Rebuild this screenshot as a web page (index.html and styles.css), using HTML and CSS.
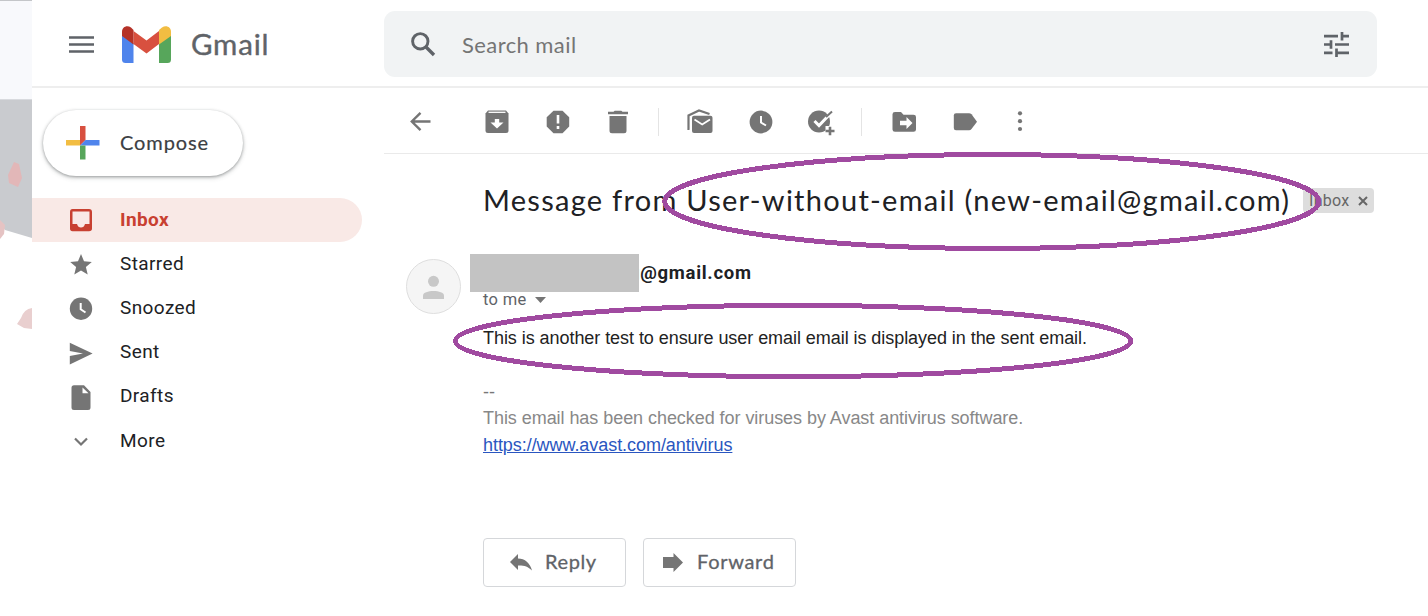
FILE: index.html
```html
<!DOCTYPE html>
<html lang="en">
<head>
<meta charset="utf-8">
<title>Gmail</title>
<link rel="stylesheet" href="styles.css">
</head>
<body>
<div class="page">
  <svg class="backdrop" width="32" height="616" viewBox="0 0 32 616">
    <rect width="32" height="99" fill="#f8f9fc"/>
    <rect width="32" height="1" fill="#c4c6c9"/>
    <path d="M0 99H32V238L5 230L0 224Z" fill="#c9cbcf"/>
    <path d="M0 99.500H32" stroke="#d8dade"/>
    <path d="M14 162L19 164L22 178L18 187L9 183L8 175Z" fill="#e2b7b8"/>
    <path d="M0 220L5 225L4 234L0 239Z" fill="#e5c3c3"/>
    <path d="M32 308Q24 309 21 318L17 324L24 328L32 329Z" fill="#e9cfcf"/>
  </svg>
  <div class="app">
    <header class="header">
      <div class="brand">
        <svg class="burger" width="26" height="18" viewBox="0 0 26 18"><path d="M0 1.500H25M0 8.500H25M0 15.500H25" stroke="#5f6368" stroke-width="2.700"/></svg>
        <svg class="logo" width="49" height="37" viewBox="0 0 49 37">
          <path d="M0 9L11.500 17V37H3.500Q0 37 0 33.500Z" fill="#4f84ec"/>
          <path d="M49 9L37 17V37H45.500Q49 37 49 33.500Z" fill="#57a65b"/>
          <path d="M11.500 5L24.500 14.500L37 5V18L24.500 27.500L11.500 18Z" fill="#d8503f"/>
          <path d="M0 10V5.500C0 1 5 -1.500 9 1.500L11.500 4V18.500Z" fill="#b53228"/>
          <path d="M49 10V5.500C49 1 44 -1.500 40 1.500L37 4V18.500Z" fill="#f2bd42"/>
        </svg>
        <span class="brand-name">Gmail</span>
      </div>
      <div class="search">
        <svg width="25" height="25" viewBox="0 0 25 25" fill="none" stroke="#5f6368"><circle cx="9.300" cy="9.300" r="7.700" stroke-width="2.900"/><path d="M14.500 14.500L23 23" stroke-width="3.400"/></svg>
        <span class="search-text">Search mail</span>
        <svg width="25" height="25" viewBox="0 0 25 25" fill="none" stroke="#5f6368" stroke-width="2.700"><path d="M0 4.200H14M18 4.200H25M18 0V8.500M0 12.500H7M7 8.300V16.700M11 12.500H25M0 20.800H8.500M12.500 20.800H25M12.500 16.500V25"/></svg>
      </div>
    </header>
    <div class="body">
      <nav class="sidebar">
        <div class="compose">
          <svg width="34" height="34" viewBox="0 0 34 34"><path d="M14 0H19.500V14L14 19.500Z" fill="#d8503f"/><path d="M0 14H14V19.500H0Z" fill="#f2bd42"/><path d="M19.500 14H33.500V19.500H14Z" fill="#4f84ec"/><path d="M14 19.500L19.500 19.500V33.500H14Z" fill="#57a65b"/></svg>
          <span>Compose</span>
        </div>
        <div class="item active">
          <svg class="icon" viewBox="0 0 28 28"><path fill-rule="evenodd" d="M5.500 3H22Q25 3 25 6V22.500Q25 25.300 22 25.300H5.500Q3 25.300 3 22.500V6Q3 3 5.500 3ZM5.500 5.500V18H10Q11 21.500 14 21.500T18 18H22.500V5.500Z" fill="#c84031"/></svg>
          <span>Inbox</span>
        </div>
        <div class="item">
          <svg class="icon" viewBox="0 0 28 28"><path d="M14 4L17 11.200L24.800 11.900L18.900 17L20.700 24.600L14 20.600L7.300 24.600L9.100 17L3.200 11.900L11 11.200Z"/></svg>
          <span>Starred</span>
        </div>
        <div class="item">
          <svg class="icon" viewBox="0 0 28 28"><circle cx="14" cy="14.700" r="11.200"/><path d="M13.700 9V15.300L18.500 18.500" fill="none" stroke="#fff" stroke-width="2"/></svg>
          <span>Snoozed</span>
        </div>
        <div class="item">
          <svg class="icon" viewBox="0 0 28 28"><path d="M2.800 3.700L25.600 14.500L2.800 25.500V17L16 14.500L2.800 12Z"/></svg>
          <span>Sent</span>
        </div>
        <div class="item">
          <svg class="icon" viewBox="0 0 28 28"><path fill-rule="evenodd" d="M7 2.300H17L23.500 9V24.500Q23.500 27 21 27H7Q4.500 27 4.500 24.500V4.800Q4.500 2.300 7 2.300ZM15.500 4.500V10.300H21.500Z"/></svg>
          <span>Drafts</span>
        </div>
        <div class="item">
          <svg class="icon" viewBox="0 0 28 28"><path d="M8 11.500L14 17.500L20 11.500" fill="none" stroke="#757575" stroke-width="2.200"/></svg>
          <span>More</span>
        </div>
      </nav>
      <main class="main">
        <div class="toolbar">
          <div class="tools back">
            <svg class="icon" viewBox="0 0 28 28"><path d="M23.500 13.500H5M13.500 4.800L4.800 13.500L13.500 22.200" fill="none" stroke="#757575" stroke-width="2.400"/></svg>
          </div>
          <div class="tools">
            <svg class="icon" viewBox="0 0 28 28"><path d="M5 2.500H23L25.500 5.500V22.500Q25.500 25 23 25H5Q2.500 25 2.500 22.500V5.500Z"/><path d="M5.500 4.300H22.500" stroke="#fff" stroke-width="1.300"/><path d="M11.800 11H16.200V14.500H20.500L14 20.500L7.500 14.500H11.800Z" fill="#fff"/></svg>
            <svg class="icon" viewBox="0 0 28 28"><path d="M9.500 2.700H18.500L25.200 9.300V18.500L18.500 25.200H9.500L2.700 18.500V9.300Z"/><path d="M14 7V15.500M14 18V21" stroke="#fff" stroke-width="2.600"/></svg>
            <svg class="icon" viewBox="0 0 28 28"><path d="M4 3.700H9.500L10.700 2.700H17.300L18.500 3.700H24V6.300H4ZM5.500 8H22.500V22.700Q22.500 25.200 20 25.200H8Q5.500 25.200 5.500 22.700Z"/></svg>
          </div>
          <i class="divider"></i>
          <div class="tools">
            <svg class="icon" viewBox="0 0 28 28"><path d="M8 7.800H24.500Q26.500 7.800 26.500 9.800V23Q26.500 25 24.500 25H8Q6 25 6 23V9.800Q6 7.800 8 7.800Z"/><path d="M8.500 11.500L16.200 16.500L24 11.500" fill="none" stroke="#fff" stroke-width="1.800"/><path d="M3.500 21H2.500V7.500L13 2.500L23.500 6" fill="none" stroke="#757575" stroke-width="2.200"/></svg>
            <svg class="icon" viewBox="0 0 28 28"><circle cx="14" cy="14" r="11.400"/><path d="M14 8V14.500L19 17.500" fill="none" stroke="#fff" stroke-width="2"/></svg>
            <svg class="icon wide" viewBox="0 0 28 28"><circle cx="12" cy="13.500" r="11"/><path d="M7.500 13L12 17.500L24 5" fill="none" stroke="#fff" stroke-width="3"/><path d="M19 9L25 3.500" stroke="#757575" stroke-width="2"/><path d="M18.500 18H28V28H18.500Z" fill="#fff"/><path d="M18.500 23H27.500M23 18.700V27.300" stroke="#757575" stroke-width="2.600"/></svg>
          </div>
          <i class="divider"></i>
          <div class="tools labels">
            <svg class="icon" viewBox="0 0 28 28"><path d="M5 4H11L13.500 6.700H23.500Q26 6.700 26 9V21.500Q26 23.700 23.500 23.700H5Q2.500 23.700 2.500 21.500V6.300Q2.500 4 5 4Z"/><path d="M10 12.800H16.500V9L22.500 15L16.500 21V17.200H10Z" fill="#fff"/></svg>
            <svg class="icon" viewBox="0 0 28 28"><path d="M5 5.200H18Q19.500 5.200 20.500 6.300L26 13.700L20.500 21Q19.500 22.300 18 22.300H5Q2.800 22.300 2.800 20V7.500Q2.800 5.200 5 5.200Z"/></svg>
            <svg class="icon" viewBox="0 0 28 28"><circle cx="14" cy="5.300" r="2.100"/><circle cx="14" cy="13.200" r="2.100"/><circle cx="14" cy="21" r="2.100"/></svg>
          </div>
        </div>
        <div class="subject">
          <h1>Message from User-without-email (new-email@gmail.com)</h1>
          <div class="chip"><span>Inbox</span><svg width="10" height="10" viewBox="0 0 10 10"><path d="M1 1L9 9M9 1L1 9" stroke="#666" stroke-width="2"/></svg></div>
        </div>
        <div class="sender">
          <svg class="avatar" width="55" height="55" viewBox="0 0 55 55"><circle cx="27.500" cy="27.500" r="27" fill="#f5f5f5" stroke="#dedede"/><circle cx="27.500" cy="22.300" r="5.500" fill="#c8c8c8"/><path d="M17 40V36.500C17 30.500 38 30.500 38 36.500V40Z" fill="#c8c8c8"/></svg>
          <div class="sender-info">
            <div class="from"><i class="redaction"></i><b>g@gmail.com</b></div>
            <div class="to"><span>to me</span><svg width="11" height="6" viewBox="0 0 11 6"><path d="M0 0H11L5.500 6Z" fill="#757575"/></svg></div>
          </div>
        </div>
        <div class="message">
          <p class="text">This is another test to ensure user email email is displayed in the sent email.</p>
          <p class="dashes">--</p>
          <p class="notice">This email has been checked for viruses by Avast antivirus software.</p>
          <p class="link"><a href="#">https://www.avast.com/antivirus</a></p>
        </div>
        <div class="actions">
          <div class="btn reply"><svg width="22" height="17" viewBox="0 0 22 17"><path d="M8 0V4.500C15 4.500 20 9 22 16.500C18 12.500 14 11.300 8 11.500V16L0 8Z" fill="#757575"/></svg><span>Reply</span></div>
          <div class="btn forward"><svg width="20" height="19" viewBox="0 0 20 19"><path d="M0 4H10.500V0L20 9.500L10.500 19V15H0Z" fill="#757575"/></svg><span>Forward</span></div>
        </div>
      </main>
    </div>
  </div>
  <svg class="marks" width="1428" height="616" viewBox="0 0 1428 616"><g fill="none" stroke="#a04aa0" stroke-width="5" shape-rendering="crispEdges"><ellipse cx="991.800" cy="201.500" rx="327" ry="47"/><ellipse cx="793" cy="341" rx="337.700" ry="35.700"/></g></svg>
</div>
</body>
</html>
```

FILE: styles.css
```css
* { box-sizing: border-box; }
body { margin: 0; background: #fff; font-family: Roboto, sans-serif; color: #202124; }
.page { position: relative; display: flex; width: 1428px; height: 616px; overflow: hidden; }
svg { display: block; flex: none; }
.app { flex: 1; }
span, b, h1, p { white-space: nowrap; }

.header { display: flex; height: 88px; border-bottom: 2px solid #eee; }
.brand { display: flex; width: 352px; padding-left: 37px; }
.burger { margin-top: 36px; }
.logo { margin: 26px 0 0 27px; }
.brand-name { margin-left: 20px; font: 29.500px/88px Lato, sans-serif; letter-spacing: .8px; -webkit-text-stroke: .4px #5f6368; color: #5f6368; }
.search { display: flex; align-items: center; width: 993px; height: 66px; margin-top: 11px; padding: 0 28px 0 27px; border-radius: 11px; background: #f1f3f4; }
.search-text { flex: 1; margin: 2px 0 0 26px; font: 22px/30px Lato, sans-serif; letter-spacing: .42px; color: #757575; }

.body { display: flex; }
.sidebar { width: 352px; padding-top: 22px; }
.compose { display: flex; align-items: center; width: 200px; height: 66px; margin: 0 0 22px 10.500px; padding-left: 23px; border-radius: 33px; background: #fff; box-shadow: 0 1px 3px rgba(60,64,67,.45), 0 2px 4px 1px rgba(60,64,67,.12); }
.compose span { margin: -3px 0 0 20.500px; font: 20px/28px Lato, sans-serif; color: #3c4043; letter-spacing: .9px; -webkit-text-stroke: .2px #3c4043; }
.item { display: flex; align-items: center; width: 330px; height: 44.200px; padding-left: 35px; font-size: 19px; letter-spacing: .4px; }
.item span { margin: -2px 0 0 25px; }
.item.active { border-radius: 0 22px 22px 0; background: #f9e9e6; color: #c84031; font-weight: 700; }
.icon { width: 28px; height: 28px; fill: #757575; }

.main { flex: 1; }
.toolbar { display: flex; align-items: center; height: 66px; padding: 2px 0 0 23px; border-bottom: 1px solid #eaeaea; }
.tools { display: flex; gap: 32.500px; }
.tools.back { margin-right: 48px; }
.tools.labels { margin-left: 1px; }
.tools.labels .icon:last-child { margin-left: -5px; }
.divider { width: 1px; height: 28px; margin: 0 27px 0 26px; background: #e4e4e4; }

.subject { display: flex; align-items: center; height: 92px; padding: 1px 0 0 99px; }
.subject h1 { width: 806px; margin: -2px 0 0; font: 29px/40px Lato, sans-serif; letter-spacing: 1.270px; color: #202124; }
.chip { display: flex; align-items: center; width: 71px; height: 25px; margin-left: 14px; padding-left: 6px; border-radius: 4px; background: #ddd; font-size: 16px; letter-spacing: .3px; color: #666; }
.chip svg { margin-left: 8px; }

.sender { display: flex; padding: 8px 0 0 22px; height: 75px; }
.avatar { margin-top: 5px; }
.sender-info { margin-left: 9px; }
.from { display: flex; height: 38px; }
.from b { margin: 0 0 0 -10px; font-size: 18.500px; line-height: 38px; letter-spacing: .7px; }
.redaction { position: relative; z-index: 1; width: 169px; height: 38px; background: #c3c3c3; }
.to { display: flex; align-items: center; gap: 9px; margin-left: 13px; font-size: 16.500px; line-height: 15px; letter-spacing: .3px; color: #5f6368; }

.message { padding-left: 99px; font: 18px/27px "Liberation Sans", Arial, sans-serif; letter-spacing: -.055px; }
.message p { margin: 0; }
.message .text { padding-top: 4px; color: #222; }
.message .dashes { margin-top: 27px; color: #777; }
.message .notice { margin-top: -1px; color: #888; }
.message a { color: #2a56c0; }

.actions { display: flex; gap: 17px; padding: 79px 0 0 99px; }
.btn { display: flex; align-items: center; width: 143px; height: 49px; padding-left: 26px; border: 1px solid #d5d7da; border-radius: 4px; font: 20px/28px Lato, sans-serif; color: #5f6368; -webkit-text-stroke: .3px #5f6368; }
.btn span { margin: -3px 0 0 13px; letter-spacing: .6px; }
.btn.forward { width: 153px; padding-left: 19px; }
.btn.forward span { margin-left: 14px; letter-spacing: .7px; }

/* Hand-drawn highlights lying over the mail */
.marks { position: absolute; top: 0; left: 0; pointer-events: none; }
```
